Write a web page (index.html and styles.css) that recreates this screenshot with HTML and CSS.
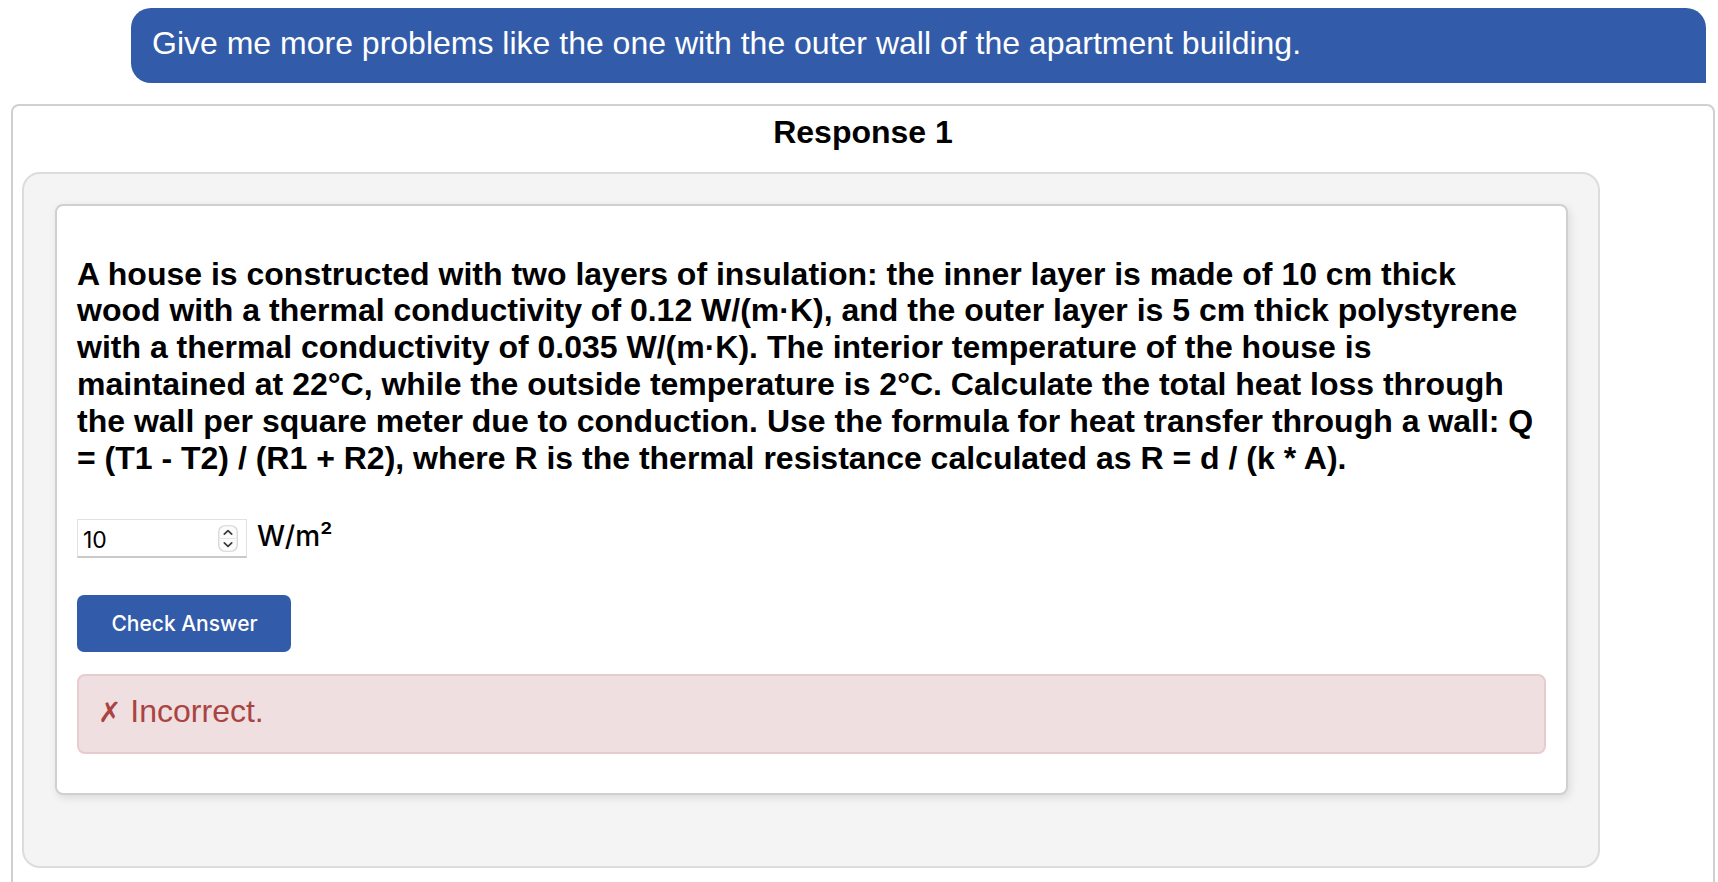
FILE: index.html
```html
<!DOCTYPE html>
<html lang="en">
<head>
<meta charset="utf-8">
<title>Response 1</title>
<link rel="stylesheet" href="styles.css">
</head>
<body>
<div class="page">
  <div class="bubble">Give me more problems like the one with the outer wall of the apartment building.</div>
  <div class="response">
    <div class="title">Response 1</div>
    <div class="panel">
      <div class="card">
        <p class="problem">A house is constructed with two layers of insulation: the inner layer is made of 10 cm thick wood with a thermal conductivity of 0.12 W/(m·K), and the outer layer is 5 cm thick polystyrene with a thermal conductivity of 0.035 W/(m·K). The interior temperature of the house is maintained at 22°C, while the outside temperature is 2°C. Calculate the total heat loss through the wall per square meter due to conduction. Use the formula for heat transfer through a wall: Q = (T1 - T2) / (R1 + R2), where R is the thermal resistance calculated as R = d / (k * A).</p>
        <div class="answer-row">
          <div class="num-input">
            <input class="num-field" type="text" value="10">
            <svg class="spinner" width="20" height="27" viewBox="0 0 20 27">
              <rect x="0.75" y="0.75" width="18.5" height="25.5" rx="6" fill="#fbfbfb" stroke="#d4d4d4" stroke-width="1.2"/>
              <line x1="2" y1="13.5" x2="18" y2="13.5" stroke="#e6e6e6" stroke-width="1"/>
              <path d="M6.3 9.2 L10 5.6 L13.7 9.2" fill="none" stroke="#3a3a3a" stroke-width="1.7" stroke-linecap="round" stroke-linejoin="round"/>
              <path d="M6.3 17.8 L10 21.4 L13.7 17.8" fill="none" stroke="#3a3a3a" stroke-width="1.7" stroke-linecap="round" stroke-linejoin="round"/>
            </svg>
          </div>
          <span class="unit">W/m²</span>
        </div>
        <button class="check-btn" type="button">Check Answer</button>
        <div class="alert"><span class="cross">✗</span> Incorrect.</div>
      </div>
    </div>
  </div>
</div>
</body>
</html>
```

FILE: styles.css
```css
html, body {
  margin: 0;
  padding: 0;
  background: #ffffff;
}

body {
  font-family: "Liberation Sans", Arial, Helvetica, sans-serif;
  color: #000;
}

.page {
  padding: 8px 3px 0 11px;
}

.bubble {
  margin: 0 9px 21px 120px;
  background: #325ca9;
  color: #ffffff;
  font-size: 32px;
  line-height: 36.8px;
  padding: 17px 21px 21px 21px;
  border-radius: 20px 20px 0 20px;
}

.response {
  border: 2px solid #d0d0d0;
  border-radius: 8px;
  padding: 8px 0 20px 0;
}

.title {
  text-align: center;
  font-weight: bold;
  font-size: 32px;
  line-height: 36.8px;
  margin-bottom: 21px;
}

.panel {
  box-sizing: border-box;
  width: 1578px;
  margin-left: 9px;
  background: #f4f4f4;
  border: 2px solid #dcdcdc;
  border-radius: 18px;
  padding: 30px 30px 71px 31px;
}

.card {
  background: #ffffff;
  border: 2px solid #d0d0d0;
  border-radius: 8px;
  box-shadow: 2px 3px 8px rgba(0, 0, 0, 0.10);
  padding: 20px 20px 39px 20px;
}

.problem {
  margin: 30px 4px 0 0;
  font-weight: bold;
  font-size: 32px;
  line-height: 36.8px;
}

.answer-row {
  margin-top: 43px;
  display: flex;
  align-items: center;
  gap: 10px;
}

.num-input {
  box-sizing: border-box;
  width: 170px;
  height: 39px;
  display: flex;
  align-items: center;
  justify-content: space-between;
  border: 1px solid #e2e2e2;
  border-bottom: 2px solid #c9c9c9;
  background: #ffffff;
  padding: 0 8px 0 5px;
}

.num-field {
  border: none;
  outline: none;
  background: transparent;
  width: 100px;
  padding: 0;
  margin: 4px 0 0 0;
  font-family: Inter, "Liberation Sans", sans-serif;
  font-size: 23px;
  color: #000;
}

.spinner {
  display: block;
  flex: none;
}

.unit {
  font-family: Inter, "Liberation Sans", sans-serif;
  font-size: 28px;
  font-weight: 500;
  margin-top: -6px;
}

.check-btn {
  display: block;
  margin-top: 37px;
  width: 214px;
  height: 57px;
  border: none;
  border-radius: 7px;
  background: #325ca9;
  color: #ffffff;
  font-family: Inter, "Liberation Sans", sans-serif;
  font-weight: 500;
  font-size: 21px;
  padding: 0 0 0 1px;
  cursor: pointer;
}

.alert {
  margin-top: 22px;
  background: #f0dfe0;
  border: 2px solid #e8cbcf;
  border-radius: 8px;
  color: #a94442;
  font-size: 32px;
  line-height: 36.8px;
  padding: 17px 19px 20px 19px;
}

.cross {
  font-family: "DejaVu Sans", sans-serif;
  font-weight: bold;
  font-size: 28px;
}
```
